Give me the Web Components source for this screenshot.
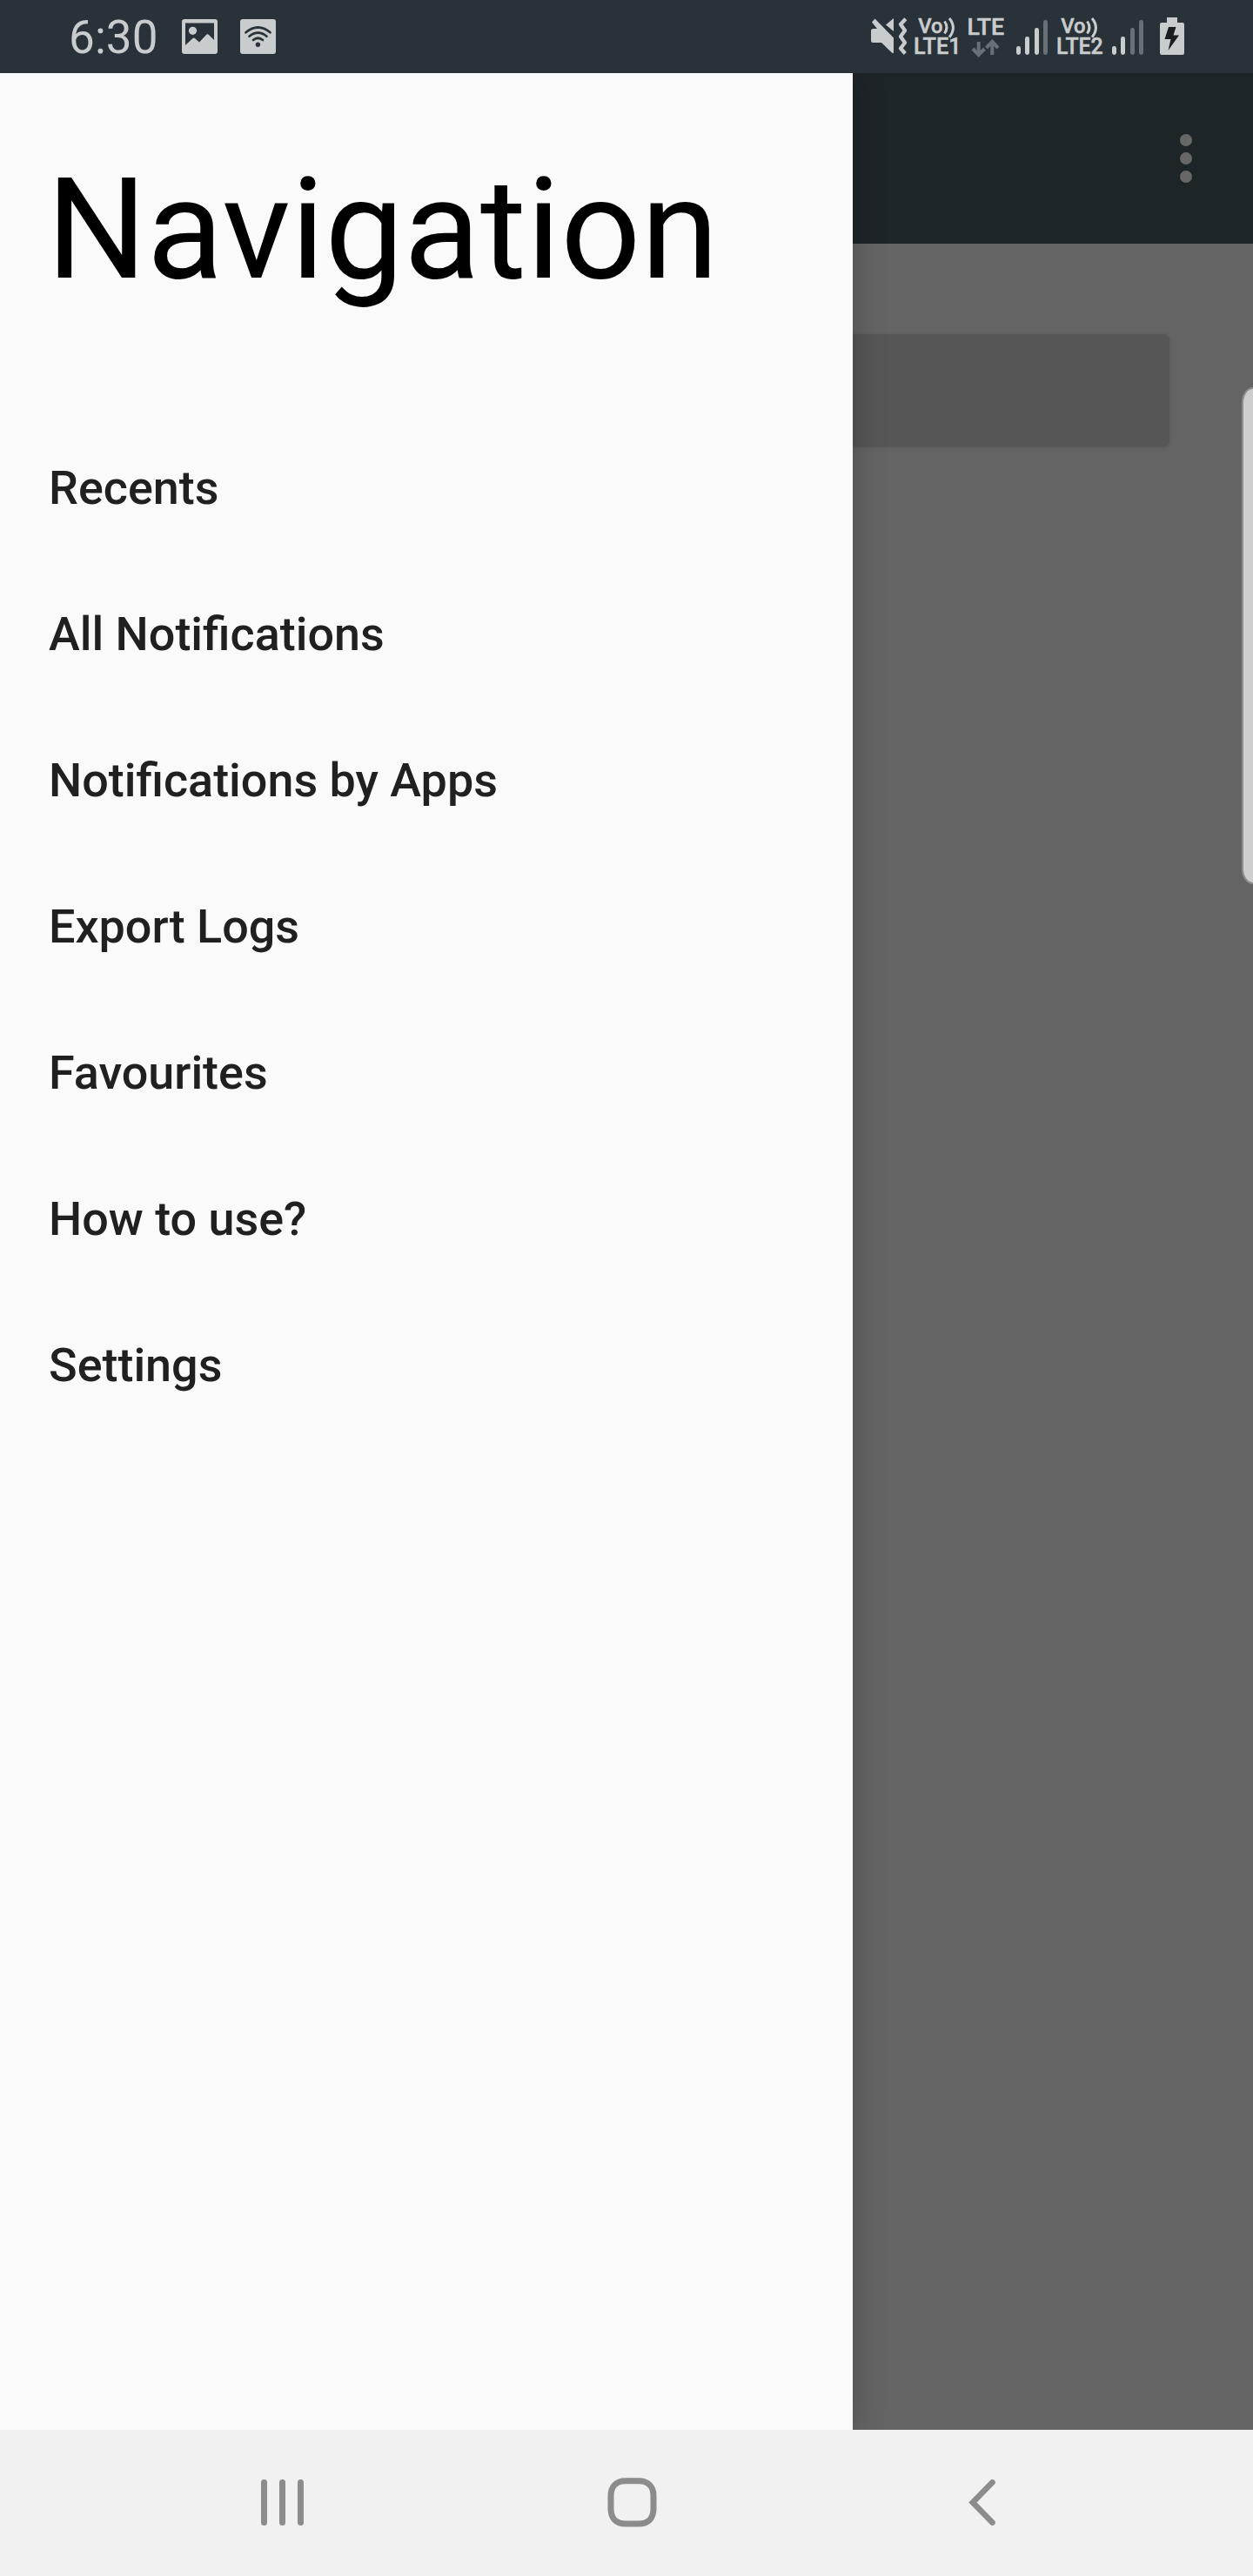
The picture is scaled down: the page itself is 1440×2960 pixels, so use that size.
<!DOCTYPE html>
<html lang="en">
<head>
<meta charset="utf-8">
<title>Navigation</title>
<style>
html,body{margin:0;padding:0;width:1440px;height:2960px;overflow:hidden}
body{font-family:Roboto,sans-serif}
</style>
</head>
<body>
<phone-screen></phone-screen>
<script>
const define = (name, html) => {
  const template = document.createElement('template');
  template.innerHTML = html;
  customElements.define(name, class extends HTMLElement {
    constructor() {
      super();
      this.attachShadow({ mode: 'open' }).append(template.content.cloneNode(true));
    }
  });
};

// Four level signal indicator; the "level" attribute sets how many bars are lit.
customElements.define('signal-bars', class extends HTMLElement {
  connectedCallback() {
    const level = Number(this.getAttribute('level'));
    const heights = [10.3, 20.7, 31, 40];
    this.attachShadow({ mode: 'open' }).innerHTML = `
      <style>
        :host{display:flex;align-items:flex-end;gap:5.7px;width:36px;height:63px;flex:none}
        i{width:4.8px;border-radius:2.4px;background:#697075;flex:none}
        i.on{background:#c8cccd}
      </style>` + heights.map((h, n) => `<i class="${n < level ? 'on' : ''}" style="height:${h}px"></i>`).join('');
  }
});

// VoLTE badge for one SIM: "sim" is its number, "span" the width of the lower line.
customElements.define('volte-badge', class extends HTMLElement {
  connectedCallback() {
    this.attachShadow({ mode: 'open' }).innerHTML = `
      <style>:host{display:block;width:54px;height:84px;flex:none}svg{display:block;overflow:visible}
      text{font:500 25px Roboto,sans-serif;fill:#c8cccd;stroke:#c8cccd;stroke-width:.5}</style>
      <svg width="54" height="84" viewBox="0 0 54 84">
        <text x="4.300" y="38" textLength="28.300" lengthAdjust="spacingAndGlyphs" style="font-size:23.5px">Vo</text>
        <g fill="none" stroke="#c8cccd" stroke-width="3">
          <path d="M34.500 24.500Q39.500 31.500 34.500 38.500"/><path d="M40 21Q48.800 31.700 40 42.800"/>
        </g>
        <text x="-1" y="62" textLength="${this.getAttribute('span')}" lengthAdjust="spacingAndGlyphs">LTE${this.getAttribute('sim')}</text>
      </svg>`;
  }
});

define('status-bar', `
<style>
:host{display:flex;justify-content:space-between;height:84px;background:#283238;color:#c8cccd}
.l,.r{display:flex;height:84px}
.l{padding-left:79px}.r{padding-right:79px}
svg{display:block;flex:none}
time{font-size:53px;line-height:62px;padding-top:12px;width:130px;letter-spacing:.1px}
text{font:500 25.6px Roboto,sans-serif;fill:#c8cccd;stroke:#c8cccd;stroke-width:.5}
</style>
<div class="l">
  <time>6:30</time>
  <svg width="67" height="84" viewBox="209 0 67 84"><path fill="#c8cccd" fill-rule="evenodd" d="M212 22H247Q250 22 250 25V59Q250 62 247 62H212Q209 62 209 59V25Q209 22 212 22ZM213 26.500V52L221.500 44Q223 43 224.500 44.500L229 48.500L237 40Q238.500 38.500 240 40L246 46V26.500Z"/><circle cx="221.500" cy="35.300" r="4.600" fill="#c8cccd"/></svg>
  <svg width="41" height="84" viewBox="276 0 41 84"><rect x="276" y="22" width="41" height="40" rx="3" fill="#c8cccd"/><g fill="none" stroke="#283238" stroke-width="2.700" stroke-linecap="round"><path d="M282.500 37.300Q296.500 25.700 310.500 37.300"/><path d="M286.500 41.700Q296.500 33.500 306.500 41.700"/><path d="M291 46Q296.500 41.500 302 46"/></g><circle cx="296.400" cy="51.200" r="2.700" fill="#283238"/></svg>
</div>
<div class="r">
  <svg width="51" height="84" viewBox="1000 0 51 84"><g fill="#c8cccd"><path d="M1003.500 33H1008L1002 25.500L1005.500 21.500L1027 43.500V60Q1027 61.500 1025.500 61L1013 49H1003.500Q1001 49 1001 46.500V35.500Q1001 33 1003.500 33Z"/><path d="M1027 21V36L1018 28.500Z"/></g><path fill="none" stroke="#c8cccd" stroke-width="4.300" stroke-linejoin="round" d="M1040.800 21.800L1035 28L1040 35L1035 42L1040 49L1035 55.500L1040.300 61.500"/></svg>
  <volte-badge sim="1" span="54.500"></volte-badge>
  <svg width="63" height="84" viewBox="1105 0 63 84"><text x="1111.500" y="39.900" textLength="42.500" lengthAdjust="spacingAndGlyphs">LTE</text><path fill="none" stroke="#697075" stroke-width="4" d="M1124.700 48V63M1118 56L1124.700 63L1131.500 56M1140.300 63V48M1133.500 55L1140.300 48L1147 55"/></svg>
  <signal-bars level="3"></signal-bars>
  <span style="width:10.500px"></span>
  <volte-badge sim="2" span="53.700"></volte-badge>
  <span style="width:9.500px"></span>
  <signal-bars level="2"></signal-bars>
  <svg width="47" height="84" viewBox="1314 0 47 84"><path fill="#c8cccd" d="M1341 20H1353V26H1359Q1361 26 1361 28V60.500Q1361 63 1359 63H1335Q1333 63 1333 60.500V28Q1333 26 1335 26H1341Z"/><path fill="#191e20" d="M1343 31H1351.500L1348.500 40.500H1355L1342.500 58L1345.500 45H1338.500Z"/></svg>
</div>`);

define('app-toolbar', `
<style>
:host{display:flex;justify-content:flex-end;height:196px;padding-right:70px;box-sizing:border-box;background:#1e2528}
div{display:flex;flex-direction:column;gap:7px;padding-top:70px}
i{width:14px;height:14px;border-radius:50%;background:#676767}
</style>
<div><i></i><i></i><i></i></div>`);

define('dimmed-content', `
<style>
:host{display:block;background:#646464}
.card{margin:103.500px 96px 0;height:129px;border-radius:7px;background:#565656;box-shadow:0 1px 5px rgba(0,0,0,.14)}
</style>
<app-toolbar></app-toolbar>
<div class="card"></div>`);

define('nav-item', `
<style>
:host{display:block;height:168px;padding-left:56px;font-size:53.900px;font-weight:500;line-height:168px;color:#202020;white-space:nowrap}
</style>
<slot></slot>`);

define('nav-drawer', `
<style>
:host{display:block;width:980px;background:#fafafa;box-shadow:0 0 36px rgba(0,0,0,.22)}
h1{margin:0;padding:85px 0 0 53.500px;height:393px;box-sizing:border-box;font-size:161.700px;font-weight:400;line-height:190px;color:#000;white-space:nowrap}
</style>
<h1>Navigation</h1>
<nav><slot></slot></nav>`);

define('edge-handle', `
<style>
:host{display:block;justify-self:end;align-self:start;margin-top:361px;width:13px;height:571px;box-sizing:border-box;border:2px solid #8e8e8e;border-right:0;border-radius:16px 0 0 16px/22px 0 0 22px;background:#cdcdcd}
</style>`);

define('system-nav', `
<style>
:host{display:flex;height:168px;background:#f1f1f1}
svg{display:block}
</style>
<svg width="1440" height="168" viewBox="0 2792 1440 168">
  <g fill="#8c8c8c"><rect x="300" y="2849" width="7" height="53" rx="3.500"/><rect x="321" y="2849" width="7" height="53" rx="3.500"/><rect x="342" y="2849" width="7" height="53" rx="3.500"/></g>
  <path fill="none" stroke="#8c8c8c" stroke-width="7" d="M719 2850.800H734C745 2850.800 751 2857.500 751 2868V2883C751 2893.500 745 2900 734 2900H719C708 2900 702 2893.500 702 2883V2868C702 2857.500 708 2850.800 719 2850.800Z"/>
  <path fill="none" stroke="#8c8c8c" stroke-width="6.800" stroke-linecap="round" d="M1140.400 2852.500L1118 2875.500L1140.400 2898.500"/>
</svg>`);

define('phone-screen', `
<style>
:host{display:flex;flex-direction:column;width:1440px;height:2960px;overflow:hidden}
main{display:grid;flex:1;overflow:hidden;grid-template:100%/100%}
main>*{grid-area:1/1}
</style>
<status-bar></status-bar>
<main>
  <dimmed-content></dimmed-content>
  <nav-drawer>
    <nav-item>Recents</nav-item>
    <nav-item>All Notifications</nav-item>
    <nav-item>Notifications by Apps</nav-item>
    <nav-item>Export Logs</nav-item>
    <nav-item>Favourites</nav-item>
    <nav-item>How to use?</nav-item>
    <nav-item>Settings</nav-item>
  </nav-drawer>
  <edge-handle></edge-handle>
</main>
<system-nav></system-nav>`);
</script>
</body>
</html>
